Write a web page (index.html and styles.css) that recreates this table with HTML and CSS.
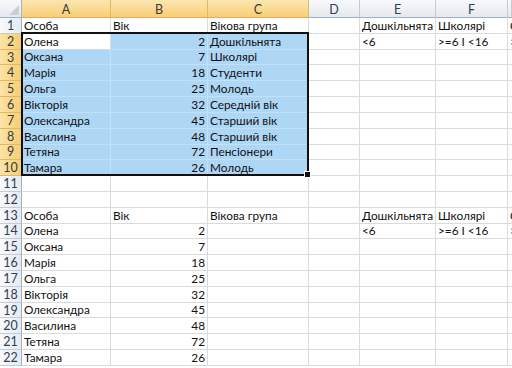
FILE: index.html
```html
<!DOCTYPE html>
<html lang="uk">
<head>
  <meta charset="UTF-8">
  <title>Вікові групи</title>
  <link rel="stylesheet" href="styles.css">
</head>
<body>
  <div class="arkush" id="arkush">
    <!-- виділений діапазон A2:C10 -->
    <div class="vydilennia"><span class="markery"></span></div>
  </div>

  <script>
    const kolonky = ['A', 'B', 'C', 'D', 'E', 'F', 'G'];
    const osoby = [
      ['Олена', 2, 'Дошкільнята'],
      ['Оксана', 7, 'Школярі'],
      ['Марія', 18, 'Студенти'],
      ['Ольга', 25, 'Молодь'],
      ['Вікторія', 32, 'Середній вік'],
      ['Олександра', 45, 'Старший вік'],
      ['Василина', 48, 'Старший вік'],
      ['Тетяна', 72, 'Пенсіонери'],
      ['Тамара', 26, 'Молодь']
    ];

    // вміст таблиці: рядок -> масив значень по колонках
    const dani = {};
    dani[1] = ['Особа', 'Вік', 'Вікова група', '', 'Дошкільнята', 'Школярі', 'С'];
    dani[2] = ['', '', '', '', '<6', '>=6 І <16', '>'];
    dani[13] = dani[1];
    dani[14] = dani[2];
    osoby.forEach((o, i) => {
      const r2 = dani[i + 2] || ['', '', '', '', '', '', ''];
      dani[i + 2] = [o[0], o[1], o[2], r2[3], r2[4], r2[5], r2[6]];
      const r14 = dani[i + 14] || ['', '', '', '', '', '', ''];
      dani[i + 14] = [o[0], o[1], '', r14[3], r14[4], r14[5], r14[6]];
    });

    const arkush = document.getElementById('arkush');
    const dodaty = (klas, tekst) => {
      const d = document.createElement('div');
      d.className = klas;
      d.textContent = tekst;
      arkush.appendChild(d);
    };

    // шапка з літерами колонок (G видно лише краєм, без літери)
    dodaty('kut', '');
    kolonky.forEach((k, i) => dodaty(i < 3 ? 'zag aktyvna' : 'zag', i < 6 ? k : ''));

    // рядки
    for (let r = 1; r <= 22; r++) {
      const vyd = r >= 2 && r <= 10;
      dodaty(vyd ? 'nom aktyvna' : 'nom', r);
      const ryadok = dani[r] || [];
      kolonky.forEach((k, i) => {
        let klas = 'kl';
        if (vyd && i < 3 && !(r === 2 && i === 0)) klas += ' syn';
        if (i === 1 && typeof ryadok[i] === 'number') klas += ' chyslo';
        dodaty(klas, ryadok[i] === undefined ? '' : ryadok[i]);
      });
    }
  </script>
</body>
</html>
```

FILE: styles.css
```css
body {
  margin: 0;
  padding: 0;
  background: #fff;
  overflow: hidden;
  font-family: "Lato", "Liberation Sans", sans-serif;
  font-size: 11.8px;
  color: #111;
}

.arkush {
  position: relative;
  display: grid;
  grid-template-columns: 22px 89px 97px 101px 51px 76px 72px 4px;
  grid-template-rows: 18px repeat(22, 15.82px);
  width: 512px;
  overflow: hidden;
}

.kut,
.zag,
.nom {
  background: linear-gradient(#f8f9fb, #e4e9ef);
  color: #2f3f58;
  font-size: 12.5px;
  display: flex;
  align-items: center;
  justify-content: center;
  box-sizing: border-box;
}

.kut {
  border-right: 1px solid #9eb1c8;
  border-bottom: 1px solid #9eb1c8;
  position: relative;
}

/* сірий трикутник у куті */
.kut::after {
  content: "";
  position: absolute;
  right: 2px;
  bottom: 2px;
  border-left: 10px solid transparent;
  border-bottom: 10px solid #c9ced6;
}

.zag {
  border-right: 1px solid #c3cbd6;
  border-bottom: 1px solid #9eb1c8;
  padding-top: 1px;
}

.nom {
  background: linear-gradient(to right, #f8f9fb, #e6ebf1);
  border-right: 1px solid #9eb1c8;
  border-bottom: 1px solid #c3cbd6;
}

.zag.aktyvna {
  background: linear-gradient(#fbe6b0, #f6cf78);
  border-right-color: #e3b862;
  border-bottom: 1px solid #f0a93a;
  color: #3b3b3b;
}

.nom.aktyvna {
  background: linear-gradient(to right, #fbe4a9, #f6cd72);
  border-right: 1px solid #f0a93a;
  border-bottom-color: #e3b862;
  color: #3b3b3b;
}

.kl {
  box-sizing: border-box;
  border-right: 1px solid #d9dbdd;
  border-bottom: 1px solid #d9dbdd;
  padding: 0 2px 1px 2px;
  display: flex;
  align-items: flex-end;
  white-space: nowrap;
  overflow: hidden;
  line-height: 13px;
}

.kl.chyslo {
  justify-content: flex-end;
}

.kl.syn {
  background: #aed6f5;
  border-right-color: #c2e0f7;
  border-bottom-color: #c2e0f7;
}

.vydilennia {
  position: absolute;
  left: 21px;
  top: 32px;
  width: 288px;
  height: 144px;
  border: 2px solid #111;
  box-sizing: border-box;
  pointer-events: none;
}

/* маркер автозаповнення */
.markery {
  position: absolute;
  right: -4px;
  bottom: -4px;
  width: 5px;
  height: 5px;
  background: #111;
  border: 1px solid #fff;
}
```
